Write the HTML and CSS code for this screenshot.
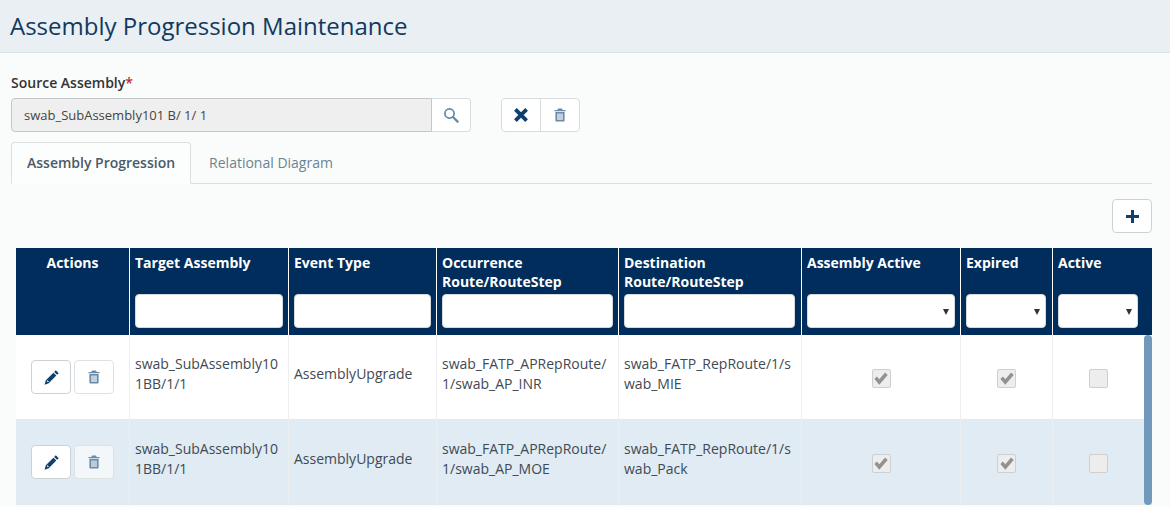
FILE: index.html
```html
<!DOCTYPE html>
<html lang="en">

<head>
    <meta charset="UTF-8">
    <title>Assembly Progression Maintenance</title>
    <link rel="stylesheet" href="styles.css">
</head>

<body>
    <header class="page-header">
        <h1>Assembly Progression Maintenance</h1>
    </header>

    <main class="content">
        <label class="field-label">Source Assembly<span class="required">*</span></label>
        <div class="source-row">
            <div class="lookup">
                <input class="lookup-input" type="text" value="swab_SubAssembly101 B/ 1/ 1" disabled>
                <button class="lookup-btn" type="button">
                    <svg width="16" height="16" viewBox="0 0 16 16"><circle cx="6.5" cy="6.5" r="4.6" fill="none" stroke="#5f8aab" stroke-width="1.7"/><path d="M10 10l4.6 4.6" stroke="#5f8aab" stroke-width="2.2" stroke-linecap="round"/></svg>
                </button>
            </div>
            <div class="btn-group">
                <button class="group-btn" type="button">
                    <svg width="16" height="16" viewBox="0 0 16 16"><path d="M2.4 2.400l11.200 11.200M13.600 2.400L2.400 13.600" stroke="#0f3f6e" stroke-width="3.800"/></svg>
                </button>
                <button class="group-btn" type="button">
                    <svg class="trash" width="12" height="14" viewBox="0 0 12 14"><use href="#trash-icon"/></svg>
                </button>
            </div>
        </div>

        <nav class="tabs">
            <a class="tab tab-active">Assembly Progression</a>
            <a class="tab">Relational Diagram</a>
        </nav>

        <div class="toolbar">
            <button class="icon-btn add-btn" type="button">
                <svg width="15" height="15" viewBox="0 0 15 15"><path d="M7.5 1v13M1 7.5h13" stroke="#0f3f6e" stroke-width="3"/></svg>
            </button>
        </div>

        <div class="grid-wrap">
            <table class="grid">
                <colgroup>
                    <col class="col-actions">
                    <col class="col-target">
                    <col class="col-event">
                    <col class="col-occurrence">
                    <col class="col-destination">
                    <col class="col-asm">
                    <col class="col-expired">
                    <col class="col-active">
                </colgroup>
                <thead>
                    <tr>
                        <th class="th-center"><div class="th-title">Actions</div></th>
                        <th><div class="th-title">Target Assembly</div><input class="filter" type="text"></th>
                        <th><div class="th-title">Event Type</div><input class="filter" type="text"></th>
                        <th><div class="th-title">Occurrence Route/RouteStep</div><input class="filter" type="text"></th>
                        <th class="th-narrow"><div class="th-title">Destination Route/RouteStep</div><input class="filter" type="text"></th>
                        <th><div class="th-title">Assembly Active</div><div class="filter filter-select"><span class="caret"></span></div></th>
                        <th class="th-narrow"><div class="th-title">Expired</div><div class="filter filter-select"><span class="caret"></span></div></th>
                        <th class="th-last"><div class="th-title">Active</div><div class="filter filter-select"><span class="caret"></span></div></th>
                    </tr>
                </thead>
                <tbody>
                    <tr>
                        <td class="td-actions">
                            <div class="actions">
                                <button class="icon-btn" type="button"><svg width="15" height="15" viewBox="0 0 14 14"><use href="#pencil-icon"/></svg></button>
                                <button class="icon-btn icon-btn-off" type="button"><svg class="trash" width="12" height="14" viewBox="0 0 12 14"><use href="#trash-icon"/></svg></button>
                            </div>
                        </td>
                        <td>swab_SubAssembly101BB/1/1</td>
                        <td>AssemblyUpgrade</td>
                        <td>swab_FATP_APRepRoute/1/swab_AP_INR</td>
                        <td>swab_FATP_RepRoute/1/swab_MIE</td>
                        <td class="td-check"><span class="check"><svg width="14" height="13" viewBox="0 0 14 12" preserveAspectRatio="none"><use href="#check-icon"/></svg></span></td>
                        <td class="td-check"><span class="check"><svg width="14" height="13" viewBox="0 0 14 12" preserveAspectRatio="none"><use href="#check-icon"/></svg></span></td>
                        <td class="td-check td-last"><span class="check"></span></td>
                    </tr>
                    <tr class="row-alt">
                        <td class="td-actions">
                            <div class="actions">
                                <button class="icon-btn" type="button"><svg width="15" height="15" viewBox="0 0 14 14"><use href="#pencil-icon"/></svg></button>
                                <button class="icon-btn icon-btn-off" type="button"><svg class="trash" width="12" height="14" viewBox="0 0 12 14"><use href="#trash-icon"/></svg></button>
                            </div>
                        </td>
                        <td>swab_SubAssembly101BB/1/1</td>
                        <td>AssemblyUpgrade</td>
                        <td>swab_FATP_APRepRoute/1/swab_AP_MOE</td>
                        <td>swab_FATP_RepRoute/1/swab_Pack</td>
                        <td class="td-check"><span class="check"><svg width="14" height="13" viewBox="0 0 14 12" preserveAspectRatio="none"><use href="#check-icon"/></svg></span></td>
                        <td class="td-check"><span class="check"><svg width="14" height="13" viewBox="0 0 14 12" preserveAspectRatio="none"><use href="#check-icon"/></svg></span></td>
                        <td class="td-check td-last"><span class="check"></span></td>
                    </tr>
                </tbody>
            </table>
            <div class="scroll-thumb"></div>
        </div>
    </main>

    <!-- shared icons -->
    <svg class="sprite" width="0" height="0">
        <symbol id="trash-icon" viewBox="0 0 12 14">
            <path fill="#6a8ca9" d="M4 .5h4l.7 1.400H11.500v1.400H.5V1.900h2.800zM1.400 4h9.200v8.400c0 .7-.5 1.100-1.100 1.100h-7c-.6 0-1.100-.4-1.100-1.100zm2 1.400v6.600h1.200V5.400zm2 0v6.600h1.200V5.400zm2 0v6.600h1.200V5.400z"/>
        </symbol>
        <symbol id="pencil-icon" viewBox="0 0 14 14">
            <path fill="#0f3f6e" d="M11 .3l2.700 2.700-1.500 1.500-2.700-2.700zM8.800 2.500l2.700 2.700-7.100 7.100-3.900 1.400 1.200-4.100zM2.500 10.300l1.200 1.200.8-.8-1.200-1.200z"/>
        </symbol>
        <symbol id="check-icon" viewBox="0 0 14 12">
            <path fill="#929292" d="M.4 6.400l2.500-2.300 2.400 2.500L11.100.4 13.700 2.700 5.300 11.700z"/>
        </symbol>
    </svg>
</body>

</html>
```

FILE: styles.css
```css
* {
    box-sizing: border-box;
}

html,
body {
    height: 100%;
}

body {
    margin: 0;
    overflow: hidden;
    background-color: #fafcfc;
    color: #33424f;
    font-family: "Open Sans", sans-serif;
    font-size: 14px;
}

button {
    display: flex;
    align-items: center;
    justify-content: center;
    padding: 0;
    background-color: #fff;
    font-family: inherit;
}

.page-header {
    height: 53px;
    padding-left: 10px;
    background-color: #e9eff3;
    border-bottom: 1px solid #dde3e7;
}

.page-header h1 {
    margin: 0;
    color: #12395e;
    font-size: 24px;
    font-weight: 400;
    line-height: 51px;
}

.content {
    padding: 20px 18px 0 11px;
}

.field-label {
    display: block;
    height: 25px;
    color: #333;
    font-size: 14px;
    font-weight: 600;
    line-height: 20px;
}

.required {
    color: #b5312e;
}

.source-row {
    display: flex;
    gap: 30px;
}

.lookup {
    display: flex;
    width: 460px;
    height: 34px;
}

.lookup-input {
    width: 421px;
    height: 34px;
    padding: 0 12px;
    background-color: #efefef;
    border: 1px solid #c4c7c9;
    border-radius: 4px 0 0 4px;
    color: #444;
    font-family: inherit;
    font-size: 13px;
}

.lookup-btn {
    flex: 1;
    border: 1px solid #d8dcdf;
    border-left: none;
    border-radius: 0 4px 4px 0;
}

.btn-group {
    display: flex;
    width: 79px;
    height: 34px;
    background-color: #fff;
    border: 1px solid #d8dcdf;
    border-radius: 4px;
}

.group-btn {
    flex: 1;
    border: none;
    background: none;
}

.group-btn + .group-btn {
    border-left: 1px solid #d8dcdf;
}

.tabs {
    display: flex;
    height: 42px;
    margin-top: 10px;
    border-bottom: 1px solid #dcdfe2;
}

.tab {
    height: 42px;
    padding: 0 16px;
    color: #6d8291;
    font-size: 14px;
    line-height: 42px;
}

.tab-active {
    padding: 0 15px;
    margin-right: 3px;
    background-color: #fcfdfd;
    border: 1px solid #dcdfe2;
    border-bottom: 1px solid #fcfdfd;
    border-radius: 4px 4px 0 0;
    color: #4a5a66;
    font-weight: 600;
    line-height: 40px;
}

.tab-active + .tab {
    padding-left: 15px;
}

.toolbar {
    display: flex;
    justify-content: flex-end;
    padding-top: 15px;
    height: 64px;
}

.icon-btn {
    width: 40px;
    height: 34px;
    border: 1px solid #cdd2d6;
    border-radius: 4px;
}

.add-btn {
    background-color: #fff;
}

.icon-btn-off {
    border-color: #dde2e5;
    background-color: rgba(255, 255, 255, 0.6);
}

.grid-wrap {
    position: relative;
    margin-left: 5px;
    width: 1136px;
    height: 259px;
    overflow: hidden;
}

.grid {
    width: 1136px;
    table-layout: fixed;
    border-collapse: separate;
    border-spacing: 0;
}

.col-actions { width: 114px; }
.col-target { width: 159px; }
.col-event { width: 148px; }
.col-occurrence { width: 182px; }
.col-destination { width: 183px; }
.col-asm { width: 159px; }
.col-expired { width: 92px; }
.col-active { width: 99px; }

.grid th {
    height: 87px;
    padding: 5px 5px 7px 5px;
    background-color: #002d5b;
    border-right: 1px solid #fff;
    color: #fff;
    font-size: 14px;
    font-weight: 700;
    line-height: 19px;
    text-align: left;
    vertical-align: top;
}

.grid th.th-center {
    text-align: center;
}

.grid th.th-narrow {
    padding-right: 6px;
}

.grid th.th-last {
    border-right: none;
}

.th-title {
    height: 41px;
}

.filter {
    display: block;
    width: 100%;
    height: 34px;
    background-color: #fff;
    border: 1px solid #d5d9dc;
    border-radius: 4px;
}

.filter-select {
    position: relative;
}

.th-last .filter {
    width: 80px;
}

.caret {
    position: absolute;
    top: 14px;
    right: 5px;
    width: 0;
    height: 0;
    border-top: 6px solid #333;
    border-left: 3px solid transparent;
    border-right: 3px solid transparent;
}

.grid td {
    height: 85px;
    padding: 0 5px 6px;
    background-color: #fff;
    border-right: 1px solid #eceeef;
    border-bottom: 1px solid #e6e9eb;
    color: #3f4a53;
    font-size: 14px;
    line-height: 20px;
    overflow-wrap: anywhere;
}

.grid td:last-child {
    border-right: none;
}

.grid .row-alt td {
    background-color: #e0ebf3;
}

.grid .td-actions {
    padding-bottom: 0;
}

.actions {
    display: flex;
    justify-content: center;
    gap: 3px;
}

.grid .td-check {
    padding: 2px 5px 0;
    text-align: center;
}

.grid .td-last {
    padding-right: 13px;
}

.check {
    display: inline-flex;
    align-items: center;
    justify-content: center;
    width: 19px;
    height: 19px;
    background-color: #ededed;
    border: 1px solid #cfcfcf;
    border-radius: 2px;
    vertical-align: middle;
}

.scroll-thumb {
    position: absolute;
    top: 87px;
    right: 0;
    width: 8px;
    height: 170px;
    background-color: #7199bb;
    border-radius: 4px;
}

.sprite {
    position: absolute;
}
```
